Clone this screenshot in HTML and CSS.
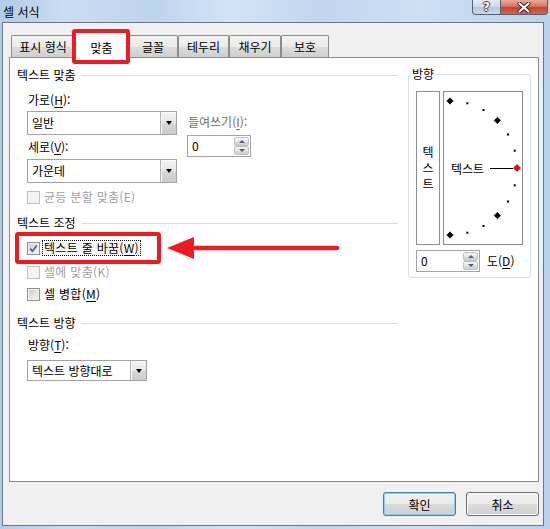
FILE: index.html
```html
<!DOCTYPE html>
<html lang="ko">
<head>
  <meta charset="UTF-8">
  <meta name="viewport" content="width=device-width, initial-scale=1.0">
  <title>셀 서식</title>
  <link rel="stylesheet" href="styles.css">
</head>
<body>
  <div class="window">
    <div class="titlebar">
      <span class="title">셀 서식</span>
      <div class="caption">
        <span class="cap-btn help">?</span>
        <span class="cap-btn close">
          <svg width="14" height="11" viewBox="0 0 14 11">
            <path d="M2.5 1.5 L11.5 9.5 M11.5 1.5 L2.5 9.5" stroke="#4a1f1a" stroke-width="4" stroke-linecap="round"/>
            <path d="M2.5 1.5 L11.5 9.5 M11.5 1.5 L2.5 9.5" stroke="#fff" stroke-width="2.2" stroke-linecap="round"/>
          </svg>
        </span>
      </div>
    </div>

    <div class="client">
      <div class="tabs">
        <div class="tab t1">표시 형식</div>
        <div class="tab active">맞춤</div>
        <div class="tab t3">글꼴</div>
        <div class="tab t4">테두리</div>
        <div class="tab t5">채우기</div>
        <div class="tab t6">보호</div>
      </div>

      <div class="panel">
        <div class="left-col">
          <div class="group-title">텍스트 맞춤</div>
          <div class="section align-grid">
            <div class="lbl">가로(<u>H</u>):</div>
            <div class="combo combo-wide gap3">
              <span class="combo-text">일반</span>
              <span class="combo-btn"></span>
            </div>
            <div class="indent">
              <div class="lbl disabled">들여쓰기(<u>I</u>):</div>
              <div class="spin">
                <span class="spin-text">0</span>
                <span class="spin-btns">
                  <span class="spin-btn up"></span>
                  <span class="spin-btn down"></span>
                </span>
              </div>
            </div>
            <div class="lbl gap4">세로(<u>V</u>):</div>
            <div class="combo combo-wide gap4">
              <span class="combo-text">가운데</span>
              <span class="combo-btn"></span>
            </div>
          </div>
          <div class="section">
            <div class="check-row off dist-row">
              <span class="cb disabled"></span>
              <span class="cb-label">균등 분할 맞춤(E)</span>
            </div>
          </div>

          <div class="group-title title-2">텍스트 조정</div>
          <div class="section">
            <div class="check-row wrap-row">
              <span class="cb">
                <svg width="11" height="11" viewBox="0 0 11 11">
                  <path d="M2.2 5.6 L4.4 8.2 L8.8 2.4" fill="none" stroke="#4b5e94" stroke-width="1.7"/>
                </svg>
              </span>
              <span class="cb-label focus">텍스트 줄 바꿈(<u>W</u>)</span>
              <svg class="arrow" width="174" height="24" viewBox="0 0 174 24">
                <path d="M24 12 H170" stroke="#ed1c24" stroke-width="4.5" stroke-linecap="round"/>
                <polygon points="0,12 27,1 27,23" fill="#ed1c24"/>
              </svg>
            </div>
            <div class="check-row off fit-row">
              <span class="cb disabled"></span>
              <span class="cb-label">셀에 맞춤(K)</span>
            </div>
            <div class="check-row merge-row">
              <span class="cb"></span>
              <span class="cb-label">셀 병합(<u>M</u>)</span>
            </div>
          </div>

          <div class="group-title title-3">텍스트 방향</div>
          <div class="section">
            <div class="lbl dir-label">방향(<u>T</u>):</div>
            <div class="combo combo-dir">
              <span class="combo-text">텍스트 방향대로</span>
              <span class="combo-btn"></span>
            </div>
          </div>
        </div>

        <div class="right-col">
          <fieldset class="orient">
            <legend>방향</legend>
            <div class="orient-body">
              <div class="orient-boxes">
                <div class="vtext">
                  <span>텍</span>
                  <span>스</span>
                  <span>트</span>
                </div>
                <div class="dial">
                  <svg width="78" height="152" viewBox="0 0 78 152">
                    <polygon points="6,5.5 9.5,9 6,12.5 2.5,9" fill="#000"/>
                    <rect x="22.3" y="10.3" width="2" height="2" fill="#000"/>
                    <rect x="38.5" y="17" width="2" height="2" fill="#000"/>
                    <polygon points="53.4,25.1 56.9,28.6 53.4,32.1 49.9,28.6" fill="#000"/>
                    <rect x="63" y="41.5" width="2" height="2" fill="#000"/>
                    <rect x="69.7" y="57.7" width="2" height="2" fill="#000"/>
                    <polygon points="73,72.5 76.5,76 73,79.5 69.5,76" fill="#f00" stroke="#7a0000" stroke-width="0.6"/>
                    <rect x="69.7" y="92.3" width="2" height="2" fill="#000"/>
                    <rect x="63" y="108.5" width="2" height="2" fill="#000"/>
                    <polygon points="53.4,119.9 56.9,123.4 53.4,126.9 49.9,123.4" fill="#000"/>
                    <rect x="38.5" y="133" width="2" height="2" fill="#000"/>
                    <rect x="22.3" y="139.7" width="2" height="2" fill="#000"/>
                    <polygon points="6,139.5 9.5,143 6,146.5 2.5,143" fill="#000"/>
                    <text x="7" y="76" class="dial-text" dominant-baseline="central">텍스트</text>
                    <path d="M46 76.5 H69" stroke="#000" stroke-width="1"/>
                  </svg>
                </div>
              </div>
              <div class="deg-row">
                <div class="spin">
                  <span class="spin-text">0</span>
                  <span class="spin-btns">
                    <span class="spin-btn up"></span>
                    <span class="spin-btn down"></span>
                  </span>
                </div>
                <span class="lbl">도(<u>D</u>)</span>
              </div>
            </div>
          </fieldset>
        </div>
      </div>

      <div class="actions">
        <button class="btn default">확인</button>
        <button class="btn">취소</button>
      </div>
    </div>
  </div>
</body>
</html>
```

FILE: styles.css
```css
* {
  box-sizing: border-box;
}

body {
  margin: 0;
  font-family: "Noto Sans CJK KR", "Noto Sans", sans-serif;
  font-size: 12px;
  line-height: 16px;
  color: #000;
}

u {
  text-decoration-thickness: 1px;
  text-underline-offset: 2px;
}

.window {
  width: 550px;
  height: 529px;
  display: flex;
  flex-direction: column;
  overflow: hidden;
  background: linear-gradient(90deg, #b3cce8 0%, #c9ddf2 12%, #bdd4ed 28%, #d3e4f5 42%, #c0d6ee 58%, #cde0f3 76%, #bad2ec 100%);
}

/* title bar */
.titlebar {
  height: 22px;
  flex-shrink: 0;
  display: flex;
  justify-content: space-between;
  align-items: flex-start;
}

.title {
  margin: 4px 0 0 3px;
}

.caption {
  display: flex;
  margin-right: 2px;
}

.cap-btn {
  height: 15px;
  border: 1px solid #58606d;
  border-top: none;
  display: flex;
  align-items: center;
  justify-content: center;
}

.help {
  width: 28px;
  border-right: none;
  border-radius: 0 0 0 4px;
  background: linear-gradient(#e4ecf6, #ccd9e8 50%, #b5c7dc 52%, #c9d8e8);
  color: #fff;
  font-family: "DejaVu Sans", sans-serif;
  font-weight: bold;
  font-size: 12px;
  line-height: 14px;
  text-shadow: 1px 0 0 #3a4452, -1px 0 0 #3a4452, 0 1px 0 #3a4452, 0 -1px 0 #3a4452;
}

.close {
  width: 48px;
  border-radius: 0 0 4px 0;
  background: linear-gradient(#e9ab9a, #d57862 45%, #c44632 52%, #d4654e);
}

.close svg {
  display: block;
}

/* dialog client area */
.client {
  flex: 1;
  margin: 0 6px 3px 2px;
  border: 1px solid #6b7687;
  background: #f0f0f0;
  padding: 9px 4px 0 6px;
}

.tabs {
  display: flex;
  align-items: flex-end;
  height: 25px;
  padding-left: 2px;
}

.tab {
  height: 22px;
  border: 1px solid #898c95;
  border-bottom: none;
  border-radius: 2px 2px 0 0;
  background: linear-gradient(#f3f3f3, #ebebeb 50%, #dddddd 51%, #cfcfcf);
  text-align: center;
  line-height: 20px;
  padding-top: 1px;
}

.t1 { width: 64px; }
.t3 { width: 50px; }
.t4 { width: 51px; }
.t5 { width: 52px; }
.t6 { width: 48px; }

.tab.active {
  width: 57px;
  height: 26px;
  margin: 0 -2px -1px;
  padding-top: 5px;
  background: #fff;
  position: relative;
  z-index: 1;
}

.tab.active::after {
  content: '';
  position: absolute;
  left: -2px;
  top: -4px;
  right: -1px;
  bottom: -6px;
  border: 4px solid #ed1c24;
  border-radius: 3px;
}

.panel {
  height: 425px;
  border: 1px solid #898c95;
  background: #fff;
  display: flex;
  gap: 10px;
  padding: 9px 6px 0 7px;
}

.left-col {
  width: 381px;
}

.right-col {
  width: 123px;
}

.group-title {
  display: flex;
  align-items: center;
  gap: 5px;
  height: 16px;
}

.group-title::after {
  content: '';
  flex: 1;
  height: 1px;
  background: #d5dfe5;
}

.title-2 { margin-top: 10px; }
.title-3 { margin-top: 13px; }

.section {
  padding-left: 10px;
}

.lbl {
  padding-left: 1px;
  white-space: nowrap;
}

.disabled {
  color: #6d6d6d;
}

.align-grid {
  display: grid;
  grid-template-columns: 150px auto;
  column-gap: 10px;
  margin-top: 9px;
}

.align-grid > * {
  grid-column: 1;
}

.align-grid .indent {
  grid-column: 2;
  grid-row: 2 / 5;
  align-self: start;
  margin-top: 6px;
}

.indent .spin {
  margin-top: 5px;
}

.gap3 { margin-top: 3px; }
.gap4 { margin-top: 4px; }

/* combo boxes */
.combo {
  display: flex;
  height: 24px;
  border: 1px solid #a3a3a3;
  background: #fff;
}

.combo-wide { width: 150px; }

.combo-dir {
  width: 120px;
  height: 21px;
  margin-top: 7px;
}

.combo-text {
  flex: 1;
  padding-left: 4px;
  display: flex;
  align-items: center;
}

.combo-btn {
  width: 16px;
  border-left: 1px solid #b4b4b4;
  background: linear-gradient(#f2f2f2, #e8e8e8 50%, #d8d8d8 51%, #cbcbcb);
  box-shadow: inset 1px 1px 0 #fbfbfb;
  display: flex;
  align-items: center;
  justify-content: center;
}

.combo-btn::after {
  content: '';
  border-top: 4px solid #000;
  border-left: 3.5px solid transparent;
  border-right: 3.5px solid transparent;
}

/* spin boxes */
.spin {
  width: 64px;
  height: 22px;
  display: flex;
  border: 1px solid #a3a3a3;
  background: #fff;
}

.spin-text {
  flex: 1;
  padding-left: 4px;
  display: flex;
  align-items: center;
}

.spin-btns {
  width: 16px;
  padding: 1px 1px 1px 0;
  display: flex;
  flex-direction: column;
}

.spin-btn {
  flex: 1;
  border: 1px solid #c2c2c2;
  border-radius: 2px;
  background: linear-gradient(#f5f5f5, #e6e6e6 50%, #dadada 51%, #d0d0d0);
  display: flex;
  align-items: center;
  justify-content: center;
}

.spin-btn::after {
  content: '';
  border-left: 3px solid transparent;
  border-right: 3px solid transparent;
}

.spin-btn.up::after {
  border-bottom: 3px solid #4d6185;
}

.spin-btn.down::after {
  border-top: 3px solid #4d6185;
}

/* check boxes */
.check-row {
  display: flex;
  align-items: center;
  gap: 2px;
  height: 16px;
  width: max-content;
  position: relative;
}

.dist-row { margin-top: 6px; }
.wrap-row { margin-top: 9px; }
.fit-row { margin-top: 8px; }
.merge-row { margin-top: 6px; }

.cb {
  width: 13px;
  height: 13px;
  flex-shrink: 0;
  border: 1px solid #8e8f8f;
  background: linear-gradient(135deg, #cdcdcd, #f6f6f6);
  box-shadow: inset 0 0 0 1px #f4f4f4;
}

.cb svg {
  display: block;
}

.cb.disabled {
  border-color: #c2c2c2;
  background: #f4f4f4;
  box-shadow: none;
}

.cb-label {
  border: 1px solid transparent;
  padding: 0 1px;
  line-height: 14px;
  letter-spacing: 0.3px;
}

.off .cb-label {
  color: #a0a0a0;
}

.cb-label.focus {
  border: 1px dotted #000;
}

.wrap-row::after {
  content: '';
  position: absolute;
  left: -12px;
  top: -8px;
  width: 138px;
  bottom: -8px;
  border: 4px solid #ed1c24;
  border-radius: 3px;
}

.arrow {
  position: absolute;
  left: 140px;
  top: -4px;
}

.dir-label {
  margin-top: 6px;
}

/* orientation box */
.orient {
  margin: -1px 0 0;
  padding: 0;
  min-width: 0;
  border: 1px solid #d5dfe5;
  border-radius: 3px;
}

.orient legend {
  margin-left: 2px;
  padding: 0 1px;
  line-height: 16px;
}

.orient-body {
  padding: 9px 7px 5px;
}

.orient-boxes {
  display: flex;
  gap: 3px;
  height: 154px;
}

.vtext {
  width: 24px;
  border: 1px solid #8e8f8f;
  display: flex;
  flex-direction: column;
  align-items: center;
  justify-content: center;
}

.dial {
  width: 80px;
  border: 1px solid #8e8f8f;
}

.dial svg {
  display: block;
}

.dial-text {
  font-family: "Noto Sans CJK KR", sans-serif;
  font-size: 12px;
  fill: #000;
}

.deg-row {
  display: flex;
  align-items: center;
  gap: 6px;
  margin-top: 5px;
}

/* buttons */
.actions {
  display: flex;
  justify-content: flex-end;
  gap: 10px;
  margin-top: 10px;
}

.btn {
  width: 73px;
  height: 24px;
  padding: 0;
  border: 1px solid #707070;
  border-radius: 3px;
  background: linear-gradient(#f2f2f2, #ebebeb 50%, #dddddd 51%, #cfcfcf);
  box-shadow: inset 0 0 0 1px #fbfbfb;
  font-family: inherit;
  font-size: 12px;
  color: #000;
}

.btn.default {
  border-color: #3c7fb1;
  box-shadow: inset 0 0 0 1px #8fd0f5;
}
```
